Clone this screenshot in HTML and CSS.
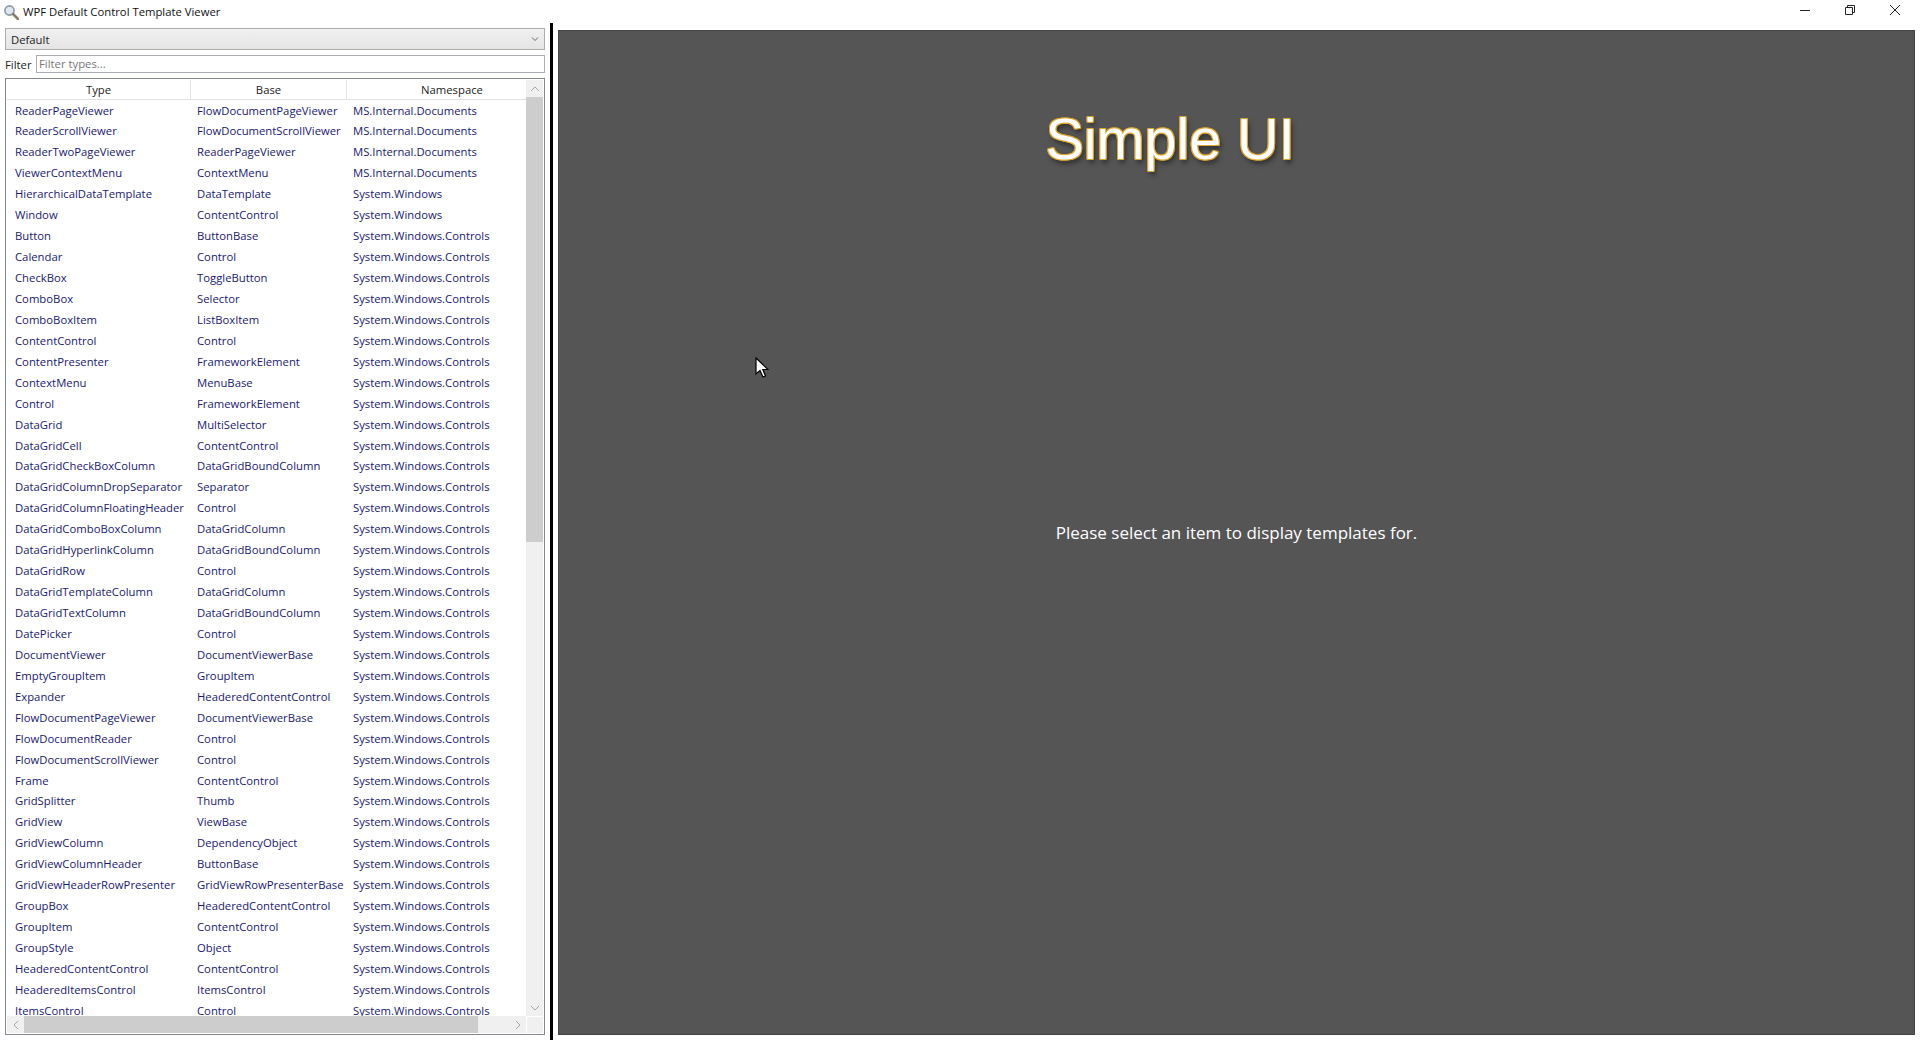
FILE: index.html
```html
<!DOCTYPE html>
<html>
<head>
    <link rel="stylesheet" href="styles.css">
    <title>WPF Default Control Template Viewer</title>
</head>
<body>
    <div id="titlebar">
        <svg class="appicon" width="16" height="16" viewBox="0 0 16 16">
            <circle cx="6.5" cy="6.5" r="4.6" fill="#dfe8ee" stroke="#8a98a4" stroke-width="1.6"/>
            <path d="M10 10 L15 15" stroke="#8d7f6b" stroke-width="2.6" stroke-linecap="round"/>
        </svg>
        <span id="apptitle">WPF Default Control Template Viewer</span>
        <div id="wincontrols">
            <svg width="12" height="12" viewBox="0 0 12 12"><path d="M1 6.5H11" stroke="#222" fill="none"/></svg>
            <svg width="12" height="12" viewBox="0 0 12 12"><path d="M1.5 3.5H8.5V10.5H1.5Z M3.5 3.5V1.5H10.5V8.5H8.5" stroke="#222" fill="none"/></svg>
            <svg width="12" height="12" viewBox="0 0 12 12"><path d="M1 1L11 11M11 1L1 11" stroke="#222" fill="none"/></svg>
        </div>
    </div>
    <div id="main">
        <div id="leftpane">
            <div id="combo">
                <span>Default</span>
                <svg width="8" height="6" viewBox="0 0 8 6"><path d="M1 1.5L4 4.5L7 1.5" stroke="#666" fill="none"/></svg>
            </div>
            <div id="filterrow">
                <span id="filterlabel">Filter</span>
                <div id="filterbox">Filter types...</div>
            </div>
            <div id="listframe">
                <div id="listbody">
                    <div id="listcontent">
                        <div class="headerrow">
                            <div class="headcell">Type</div>
                            <div class="headcell">Base</div>
                            <div class="headcell">Namespace</div>
                        </div>
                        <div id="rows"></div>
                    </div>
                    <div id="vscroll">
                        <div class="arrowbtn"><svg width="10" height="6" viewBox="0 0 10 6"><path d="M1 5L5 1L9 5" stroke="#a6a6a6" fill="none"/></svg></div>
                        <div id="vtrack"><div id="vthumb"></div></div>
                        <div class="arrowbtn"><svg width="10" height="6" viewBox="0 0 10 6"><path d="M1 1L5 5L9 1" stroke="#a6a6a6" fill="none"/></svg></div>
                    </div>
                </div>
                <div id="hscroll">
                    <div class="arrowbtnh"><svg width="6" height="10" viewBox="0 0 6 10"><path d="M5 1L1 5L5 9" stroke="#a6a6a6" fill="none"/></svg></div>
                    <div id="htrack"><div id="hthumb"></div></div>
                    <div class="arrowbtnh"><svg width="6" height="10" viewBox="0 0 6 10"><path d="M1 1L5 5L1 9" stroke="#a6a6a6" fill="none"/></svg></div>
                    <div id="corner"></div>
                </div>
            </div>
        </div>
        <div id="splitter"></div>
        <div id="rightwrap">
            <div id="rightpane">
                <div id="simpleui">Simple UI</div>
                <div id="pleaseselect">Please select an item to display templates for.</div>
                <svg id="cursor" width="14" height="21" viewBox="0 0 14 21">
                    <path d="M1 1V17L5 13.5L8 20L10.5 19L7.8 12.5H13Z" fill="#fff" stroke="#000" stroke-width="1.2"/>
                </svg>
            </div>
        </div>
    </div>
    <script src="rows.js"></script>
</body>
</html>
```
FILE: rows.js
```js
var A="MS.Internal.Documents", B="System.Windows", C="System.Windows.Controls";
var data=[
["ReaderPageViewer","FlowDocumentPageViewer",A],
["ReaderScrollViewer","FlowDocumentScrollViewer",A],
["ReaderTwoPageViewer","ReaderPageViewer",A],
["ViewerContextMenu","ContextMenu",A],
["HierarchicalDataTemplate","DataTemplate",B],
["Window","ContentControl",B],
["Button","ButtonBase",C],
["Calendar","Control",C],
["CheckBox","ToggleButton",C],
["ComboBox","Selector",C],
["ComboBoxItem","ListBoxItem",C],
["ContentControl","Control",C],
["ContentPresenter","FrameworkElement",C],
["ContextMenu","MenuBase",C],
["Control","FrameworkElement",C],
["DataGrid","MultiSelector",C],
["DataGridCell","ContentControl",C],
["DataGridCheckBoxColumn","DataGridBoundColumn",C],
["DataGridColumnDropSeparator","Separator",C],
["DataGridColumnFloatingHeader","Control",C],
["DataGridComboBoxColumn","DataGridColumn",C],
["DataGridHyperlinkColumn","DataGridBoundColumn",C],
["DataGridRow","Control",C],
["DataGridTemplateColumn","DataGridColumn",C],
["DataGridTextColumn","DataGridBoundColumn",C],
["DatePicker","Control",C],
["DocumentViewer","DocumentViewerBase",C],
["EmptyGroupItem","GroupItem",C],
["Expander","HeaderedContentControl",C],
["FlowDocumentPageViewer","DocumentViewerBase",C],
["FlowDocumentReader","Control",C],
["FlowDocumentScrollViewer","Control",C],
["Frame","ContentControl",C],
["GridSplitter","Thumb",C],
["GridView","ViewBase",C],
["GridViewColumn","DependencyObject",C],
["GridViewColumnHeader","ButtonBase",C],
["GridViewHeaderRowPresenter","GridViewRowPresenterBase",C],
["GroupBox","HeaderedContentControl",C],
["GroupItem","ContentControl",C],
["GroupStyle","Object",C],
["HeaderedContentControl","ContentControl",C],
["HeaderedItemsControl","ItemsControl",C],
["ItemsControl","Control",C]
];
var rows=document.getElementById("rows");
data.forEach(function(r)
{
    var row=document.createElement("div");
    row.className="row";
    r.forEach(function(t)
    {
        var cell=document.createElement("div");
        cell.className="cell";
        cell.textContent=t;
        row.appendChild(cell);
    });
    rows.appendChild(row);
});
```
FILE: styles.css
```css
body
{
    margin:0;
    height:1040px;
    overflow:hidden;
    background-color:white;
    font-family:"Open Sans","Noto Sans",sans-serif;
    font-size:11.3px;
    color:#222;
    display:flex;
    flex-direction:column;
}
#titlebar
{
    height:23px;
    display:flex;
    align-items:center;
    padding-left:3px;
}
.appicon
{
    margin-right:4px;
}
#apptitle
{
    font-size:11.3px;
    color:#111;
}
#wincontrols
{
    margin-left:auto;
    display:flex;
    align-items:center;
    gap:33px;
    padding-right:19px;
    padding-bottom:3px;
}
#main
{
    flex:1;
    display:flex;
    min-height:0;
}
#leftpane
{
    width:540px;
    padding:5px 0 5px 5px;
    display:flex;
    flex-direction:column;
}
#combo
{
    height:22px;
    box-sizing:border-box;
    border:1px solid #acacac;
    background:linear-gradient(#f0f0f0,#e5e5e5);
    display:flex;
    align-items:center;
    justify-content:space-between;
    padding:0 5px 0 5px;
}
#filterrow
{
    display:flex;
    align-items:center;
    margin-top:5px;
    height:18px;
}
#filterlabel
{
    width:31px;
}
#filterbox
{
    flex:1;
    height:18px;
    box-sizing:border-box;
    border:1px solid #abadb3;
    padding-left:2px;
    color:#777;
    line-height:16px;
}
#listframe
{
    flex:1;
    min-height:0;
    margin-top:5px;
    border:1px solid #828790;
    display:flex;
    flex-direction:column;
    padding:1px;
}
#listbody
{
    flex:1;
    min-height:0;
    display:flex;
}
#listcontent
{
    flex:1;
    overflow:hidden;
    min-width:0;
}
.headerrow
{
    display:flex;
    height:19px;
    border-bottom:1px solid #e0e0e0;
    line-height:19px;
    color:#222;
}
.headcell
{
    text-align:center;
    border-right:1px solid #e5e5e5;
    box-sizing:border-box;
    flex-shrink:0;
}
.headcell:nth-child(1)
{
    width:184px;
}
.headcell:nth-child(2)
{
    width:156px;
}
.headcell:nth-child(3)
{
    width:210px;
    border-right:none;
}
#rows
{
    padding-top:0.5px;
}
.row
{
    display:flex;
    height:20.95px;
    line-height:20.95px;
    color:#191970;
}
.cell
{
    white-space:nowrap;
    box-sizing:border-box;
    padding-left:8px;
}
.cell:nth-child(1)
{
    width:182px;
}
.cell:nth-child(2)
{
    width:156px;
}
#vscroll
{
    width:17px;
    background-color:#f0f0f0;
    display:flex;
    flex-direction:column;
}
.arrowbtn
{
    height:17px;
    display:flex;
    align-items:center;
    justify-content:center;
}
#vtrack
{
    flex:1;
}
#vthumb
{
    height:445px;
    background-color:#cdcdcd;
}
#hscroll
{
    height:17px;
    display:flex;
    background-color:#f0f0f0;
}
.arrowbtnh
{
    width:17px;
    display:flex;
    align-items:center;
    justify-content:center;
}
#htrack
{
    flex:1;
}
#hthumb
{
    width:454px;
    height:17px;
    background-color:#cdcdcd;
}
#corner
{
    width:17px;
    border-left:1px solid white;
    border-top:1px solid white;
    box-sizing:border-box;
}
#splitter
{
    width:3px;
    margin-left:5px;
    background-color:black;
}
#rightwrap
{
    flex:1;
    padding:7px 5px 5px 5px;
    display:flex;
}
#rightpane
{
    flex:1;
    position:relative;
    box-sizing:border-box;
    border:1px solid #444;
    background-color:#555555;
    display:flex;
    flex-direction:column;
    align-items:center;
    color:white;
}
#simpleui
{
    font-family:"Liberation Sans",Arial,sans-serif;
    font-size:57.5px;
    color:white;
    margin-top:75px;
    margin-right:133px;
    line-height:66px;
    text-shadow:1px 0 0 #dca52c,-1px 0 0 #dca52c,0 1px 0 #dca52c,0 -1px 0 #dca52c,1px 1px 0 #dca52c,-1px -1px 0 #dca52c,1px -1px 0 #dca52c,-1px 1px 0 #dca52c,2px 4px 5px #2a2a2a;
}
#pleaseselect
{
    margin-top:349px;
    font-size:17px;
    line-height:24px;
}
#cursor
{
    position:absolute;
    left:196px;
    top:326px;
}
```
